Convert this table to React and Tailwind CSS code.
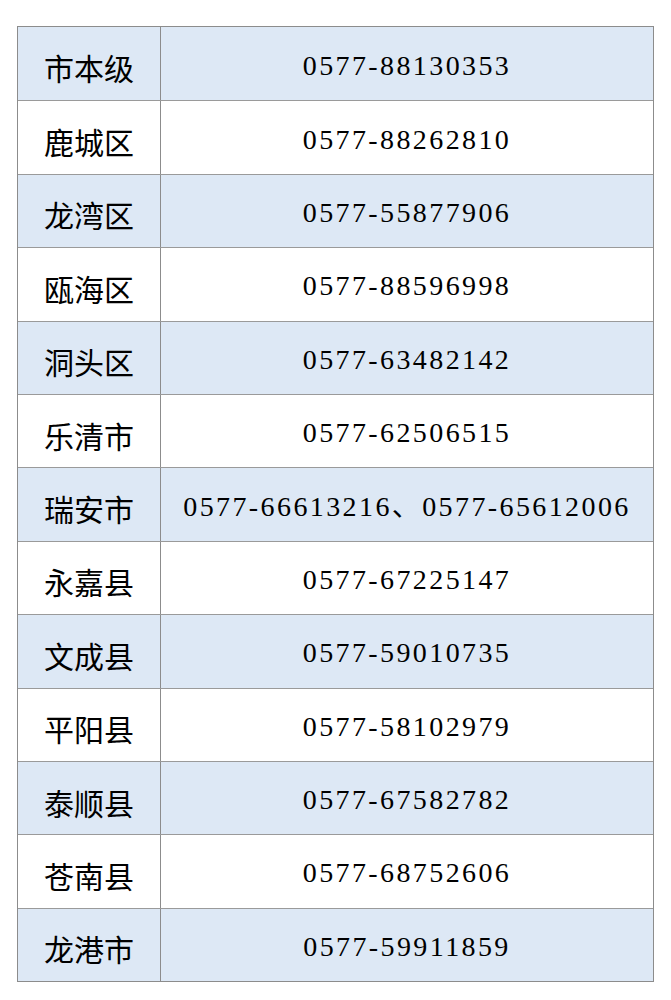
import React from 'react'

const rows = [
  ['市本级', '0577-88130353'],
  ['鹿城区', '0577-88262810'],
  ['龙湾区', '0577-55877906'],
  ['瓯海区', '0577-88596998'],
  ['洞头区', '0577-63482142'],
  ['乐清市', '0577-62506515'],
  ['瑞安市', '0577-66613216、0577-65612006'],
  ['永嘉县', '0577-67225147'],
  ['文成县', '0577-59010735'],
  ['平阳县', '0577-58102979'],
  ['泰顺县', '0577-67582782'],
  ['苍南县', '0577-68752606'],
  ['龙港市', '0577-59911859'],
]

const App = () => {
  return (
    <div className="w-[671px] h-[1000px] bg-white pt-[26px] pl-[17px]">
      <div className="w-[637px] border border-[#8c8c8c] font-['Liberation_Serif','Noto_Sans_CJK_SC',serif] text-black">
        {rows.map(([area, phone], i) => (
          <div
            key={area}
            className={`flex h-[73.4px] ${i > 0 ? 'border-t border-[#9a9a9a]' : ''} ${i % 2 === 0 ? 'bg-[#dde8f5]' : 'bg-white'}`}
          >
            <div className="w-[143px] shrink-0 border-r border-[#8c8c8c] flex items-center justify-center text-[30px] font-['Noto_Sans_CJK_SC',sans-serif] pt-[8px]">
              {area}
            </div>
            <div className="flex-1 flex items-center justify-center text-[28px] tracking-[2.4px] pt-[4px]">
              {phone}
            </div>
          </div>
        ))}
      </div>
    </div>
  )
}

export default App
